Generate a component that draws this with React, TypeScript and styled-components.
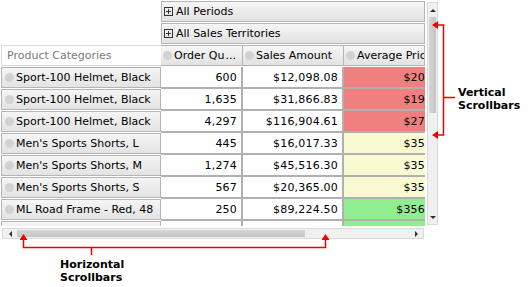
import styled, { createGlobalStyle } from "styled-components";

const GlobalStyle = createGlobalStyle`
  body {
    margin: 0;
    background: #fff;
    font-family: "DejaVu Sans", Verdana, sans-serif;
  }
`;

const Page = styled.div`
  position: relative;
  width: 528px;
  height: 287px;
  padding: 1px 0 0 1px;
  box-sizing: border-box;
`;

const Pivot = styled.div`
  display: flex;
  gap: 2px;
  align-items: flex-start;
`;

const Main = styled.div`
  display: flex;
  flex-direction: column;
  gap: 2px;
`;

const Viewport = styled.div`
  width: 424px;
  height: 225px;
  overflow: hidden;
  display: grid;
  grid-template-columns: 160px 82px 101px 81px;
  grid-auto-rows: 22px;
  font-size: 11px;
  color: #000;
`;

const Blank = styled.div``;

const Span = styled.div`
  grid-column: 2 / 5;
  display: flex;
  align-items: center;
  gap: 3px;
  padding-left: 2px;
  margin-bottom: 1px;
  background: linear-gradient(#f6f6f6, #e2e2e2);
  border: 1px solid #b5b5b5;
  box-sizing: border-box;
  white-space: nowrap;
`;

const Plus = styled.span`
  width: 9px;
  height: 9px;
  box-sizing: border-box;
  border: 1px solid #333;
  position: relative;
  flex: none;
  &::before,
  &::after {
    content: "";
    position: absolute;
    background: #333;
  }
  &::before {
    left: 1px;
    right: 1px;
    top: 3px;
    height: 1px;
  }
  &::after {
    top: 1px;
    bottom: 1px;
    left: 3px;
    width: 1px;
  }
`;

const Caption = styled.div`
  display: flex;
  align-items: center;
  padding-left: 5px;
  color: #7a7a7a;
  font-size: 11px;
  border: 1px solid #dcdcdc;
  border-right: none;
  margin-bottom: 1px;
  box-sizing: border-box;
`;

const Dot = styled.span`
  width: 9px;
  height: 9px;
  border-radius: 50%;
  background: #d2d2d2;
  flex: none;
`;

const ColHead = styled.div`
  display: flex;
  align-items: center;
  gap: 2px;
  padding-left: 2px;
  background: linear-gradient(#f6f6f6, #e2e2e2);
  border: 1px solid #b5b5b5;
  border-left: none;
  margin-bottom: 1px;
  box-sizing: border-box;
  white-space: nowrap;
  overflow: hidden;
`;

const RowHead = styled.div`
  display: flex;
  align-items: center;
  gap: 2px;
  padding-left: 3px;
  background: linear-gradient(#f5f5f5, #e3e3e3);
  border: 1px solid #b5b5b5;
  margin-bottom: 1px;
  box-sizing: border-box;
  white-space: nowrap;
`;

const Cell = styled.div<{ $bg?: string; $last?: boolean }>`
  display: flex;
  align-items: center;
  justify-content: flex-end;
  padding-right: ${(p) => (p.$last ? 0 : 4)}px;
  background: ${(p) => p.$bg ?? "#fff"};
  border-right: ${(p) => (p.$last ? "none" : "2px solid #b0b0b0")};
  border-bottom: 2px solid #b0b0b0;
  box-sizing: border-box;
  white-space: nowrap;
  overflow: hidden;
  letter-spacing: 0.2px;
`;

const HScroll = styled.div`
  width: 422px;
  height: 11px;
  margin-left: 1px;
  display: flex;
  background: #f0f0f0;
  border: 1px solid #dadada;
  box-sizing: border-box;
`;

const VScroll = styled.div`
  width: 11px;
  height: 223px;
  margin-top: 1px;
  display: flex;
  flex-direction: column;
  background: #f0f0f0;
  border: 1px solid #dadada;
  box-sizing: border-box;
`;

const Arrow = styled.div<{ $dir: "up" | "down" | "left" | "right" }>`
  flex: none;
  width: ${(p) => (p.$dir === "left" || p.$dir === "right" ? "14px" : "auto")};
  height: ${(p) => (p.$dir === "up" || p.$dir === "down" ? "14px" : "auto")};
  display: flex;
  align-items: center;
  justify-content: center;
  &::before {
    content: "";
    border: 3px solid transparent;
    ${(p) =>
      p.$dir === "up"
        ? "border-bottom-color: #333; border-top-width: 0;"
        : p.$dir === "down"
        ? "border-top-color: #333; border-bottom-width: 0;"
        : p.$dir === "left"
        ? "border-right-color: #333; border-left-width: 0;"
        : "border-left-color: #333; border-right-width: 0;"}
  }
`;

const Thumb = styled.div<{ $vertical?: boolean }>`
  flex: none;
  background: ${(p) =>
    p.$vertical
      ? "linear-gradient(90deg, #d6d6d6, #c4c4c4)"
      : "linear-gradient(#d6d6d6, #c4c4c4)"};
  ${(p) => (p.$vertical ? "height: 96px; margin: 0 1px;" : "width: 288px; margin: 1px 0;")}
`;

const Track = styled.div`
  flex: 1;
`;

const Callout = styled.svg`
  position: absolute;
  left: 0;
  top: 0;
  pointer-events: none;
`;

const Note = styled.div<{ $x: number; $y: number }>`
  position: absolute;
  left: ${(p) => p.$x}px;
  top: ${(p) => p.$y}px;
  font-family: "DejaVu Sans", Verdana, sans-serif;
  font-weight: bold;
  font-size: 11px;
  line-height: 13px;
  color: #000;
`;

type Row = { name: string; qty: string; sales: string; avg: string; bg: string };

const rows: Row[] = [
  { name: "Sport-100 Helmet, Black", qty: "600", sales: "$12,098.08", avg: "$20", bg: "#f08080" },
  { name: "Sport-100 Helmet, Black", qty: "1,635", sales: "$31,866.83", avg: "$19", bg: "#f08080" },
  { name: "Sport-100 Helmet, Black", qty: "4,297", sales: "$116,904.61", avg: "$27", bg: "#f08080" },
  { name: "Men's Sports Shorts, L", qty: "445", sales: "$16,017.33", avg: "$35", bg: "#fafad2" },
  { name: "Men's Sports Shorts, M", qty: "1,274", sales: "$45,516.30", avg: "$35", bg: "#fafad2" },
  { name: "Men's Sports Shorts, S", qty: "567", sales: "$20,365.00", avg: "$35", bg: "#fafad2" },
  { name: "ML Road Frame - Red, 48", qty: "250", sales: "$89,224.50", avg: "$356", bg: "#90ee90" },
];

export default function App() {
  return (
    <Page>
      <GlobalStyle />
      <Pivot>
        <Main>
          <Viewport>
            <Blank />
            <Span>
              <Plus />
              All Periods
            </Span>
            <Blank />
            <Span>
              <Plus />
              All Sales Territories
            </Span>
            <Caption>Product Categories</Caption>
            <ColHead>
              <Dot />
              Order Qu&#8202;...
            </ColHead>
            <ColHead>
              <Dot />
              Sales Amount
            </ColHead>
            <ColHead>
              <Dot />
              Average Price
            </ColHead>
            {rows.flatMap((r, i) => [
              <RowHead key={`h${i}`}>
                <Dot />
                {r.name}
              </RowHead>,
              <Cell key={`q${i}`}>{r.qty}</Cell>,
              <Cell key={`s${i}`}>{r.sales}</Cell>,
              <Cell key={`a${i}`} $bg={r.bg} $last>
                {r.avg}
              </Cell>,
            ])}
            <RowHead />
            <Cell />
            <Cell />
            <Cell $bg="#90ee90" $last />
          </Viewport>
          <HScroll>
            <Arrow $dir="left" />
            <Thumb />
            <Track />
            <Arrow $dir="right" />
          </HScroll>
        </Main>
        <VScroll>
          <Arrow $dir="up" />
          <Thumb $vertical />
          <Track />
          <Arrow $dir="down" />
        </VScroll>
      </Pivot>

      <Callout width="528" height="287" viewBox="0 0 528 287">
        <g stroke="#e00" strokeWidth="1.5" fill="none">
          <polyline points="437,25 443.5,25 443.5,135 437,135" />
          <line x1="443" y1="97.5" x2="455" y2="97.5" />
          <polyline points="23.5,239 23.5,247.5 325.5,247.5 325.5,239" />
          <line x1="91.5" y1="247" x2="91.5" y2="255" />
        </g>
        <g fill="#e00">
          <polygon points="432,25 438,21 438,29" />
          <polygon points="432,135 438,131 438,139" />
          <polygon points="23.5,234 19.5,240 27.5,240" />
          <polygon points="325.5,234 321.5,240 329.5,240" />
        </g>
      </Callout>
      <Note $x={458} $y={86}>
        Vertical
        <br />
        Scrollbars
      </Note>
      <Note $x={60} $y={258}>
        Horizontal
        <br />
        Scrollbars
      </Note>
    </Page>
  );
}
